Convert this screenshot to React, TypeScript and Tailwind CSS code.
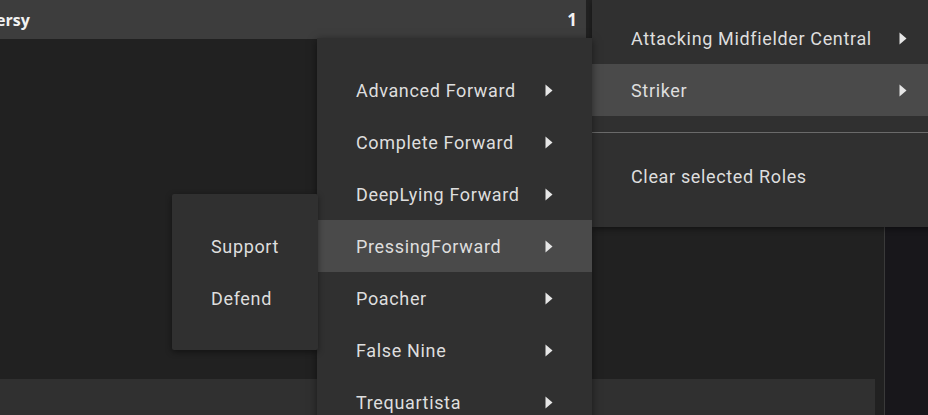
import React from 'react'

type MenuItem = {
  label: string
  submenu?: boolean
  active?: boolean
}

const Arrow = () => (
  <svg width="8" height="13" viewBox="0 0 8 13" className="shrink-0">
    <path d="M0.5 0.5 L7.5 6.5 L0.5 12.5 Z" fill="#e6e6e6" />
  </svg>
)

const MenuRow = ({ label, submenu, active }: MenuItem) => (
  <div
    className={`flex h-[52px] items-center justify-between pl-[39px] pr-[39px] ${
      active ? 'bg-[#4a4a4a]' : ''
    }`}
  >
    <span className="whitespace-nowrap text-[18px] tracking-[0.65px] text-[#dedede]">{label}</span>
    {submenu && <Arrow />}
  </div>
)

const forwardRoles: MenuItem[] = [
  { label: 'Advanced Forward', submenu: true },
  { label: 'Complete Forward', submenu: true },
  { label: 'DeepLying Forward', submenu: true },
  { label: 'PressingForward', submenu: true, active: true },
  { label: 'Poacher', submenu: true },
  { label: 'False Nine', submenu: true },
  { label: 'Trequartista', submenu: true },
]

export default function App() {
  return (
    <div
      className="relative h-[415px] w-[928px] overflow-hidden bg-[#212121]"
      style={{ fontFamily: 'Roboto, "Noto Sans", sans-serif' }}
    >
      <div className="flex h-full">
        <div className="flex w-[884px] flex-col">
          <div className="flex h-[39px] shrink-0">
            <div
              className="flex w-[586px] items-center justify-between overflow-hidden bg-[#3d3d3d] pr-[9px]"
              style={{ fontFamily: '"Open Sans", sans-serif' }}
            >
              <span className="-ml-[4px] text-[16px] font-bold text-[#f2f2f2]">ersy</span>
              <span className="text-[17px] font-bold text-[#f2f2f2]">1</span>
            </div>
            <div className="flex-1 bg-[#222222]" />
          </div>
          <div className="flex-1 bg-[#212121]" />
          <div className="h-[36px] w-[875px] shrink-0 bg-[#303030]" />
        </div>
        <div className="flex-1 border-l border-[#3a3a3a] bg-[#18171b]" />
      </div>

      {/* top-right role menu */}
      <div className="absolute left-[592px] top-0 w-[354px] bg-[#303030] pt-[12px] pb-[25px] shadow-[0_2px_6px_rgba(0,0,0,0.45)]">
        <MenuRow label="Attacking Midfielder Central" submenu />
        <MenuRow label="Striker" submenu active />
        <div className="mt-[16px] mb-[17px] h-px bg-[#6a6a6a]" />
        <MenuRow label="Clear selected Roles" />
      </div>

      {/* striker roles */}
      <div className="absolute left-[317px] top-[38px] w-[275px] bg-[#303030] pt-[26px] pb-[26px] shadow-[0_2px_8px_rgba(0,0,0,0.5)]">
        {forwardRoles.map((r) => (
          <MenuRow key={r.label} {...r} />
        ))}
      </div>

      {/* duty submenu */}
      <div className="absolute left-[172px] top-[194px] w-[146px] rounded-[2px] bg-[#303030] py-[26px] shadow-[0_2px_6px_rgba(0,0,0,0.45)]">
        <MenuRow label="Support" />
        <MenuRow label="Defend" />
      </div>
    </div>
  )
}
